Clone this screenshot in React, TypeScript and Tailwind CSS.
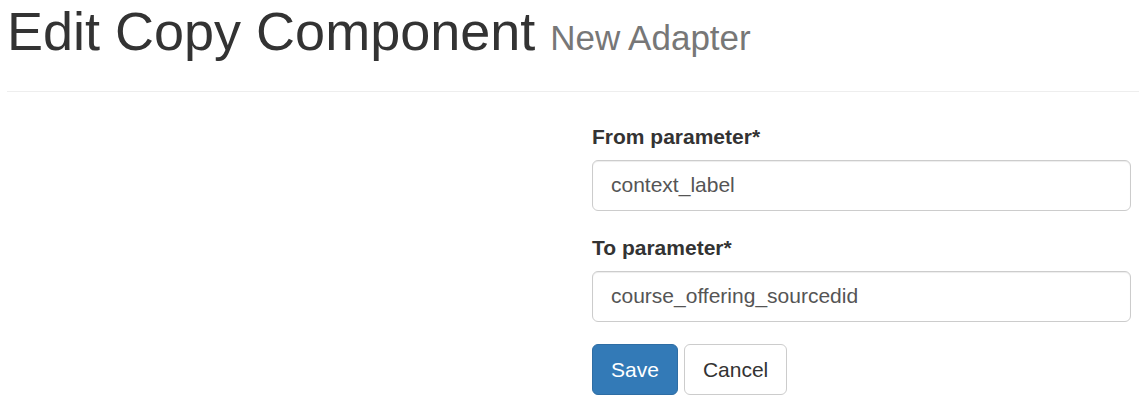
const fields = [
  { label: "From parameter*", value: "context_label" },
  { label: "To parameter*", value: "course_offering_sourcedid" },
];

const App = () => {
  return (
    <div className="min-h-[415px] bg-white px-[7px] font-['Liberation_Sans',Arial,sans-serif] text-[#333]">
      <div className="border-b border-[#eee] pt-[2px] pb-[30px]">
        <h1 className="text-[54px] leading-[59.4px] font-normal text-[#333]">
          Edit Copy Component{" "}
          <small className="text-[35px] leading-none text-[#777]">New Adapter</small>
        </h1>
      </div>

      <form className="ml-[585px] mr-[8px] mt-[30px]" onSubmit={(e) => e.preventDefault()}>
        {fields.map((field, index) => (
          <div className="mb-[22.5px]" key={index}>
            <label className="mb-[7.5px] block text-[21px] leading-[30px] font-bold text-[#333]">
              {field.label}
            </label>
            <input
              type="text"
              defaultValue={field.value}
              className="block h-[51px] w-full rounded-[6px] border border-[#ccc] bg-white px-[18px] py-[9px] text-[21px] leading-[30px] text-[#555] shadow-[inset_0_1px_1px_rgba(0,0,0,0.075)] outline-none"
            />
          </div>
        ))}
        <div className="flex gap-[6px]">
          <button
            type="submit"
            className="h-[51px] rounded-[6px] border border-[#2e6da4] bg-[#337ab7] px-[18px] text-[21px] leading-[30px] text-white"
          >
            Save
          </button>
          <button
            type="button"
            className="h-[51px] rounded-[6px] border border-[#ccc] bg-white px-[18px] text-[21px] leading-[30px] text-[#333]"
          >
            Cancel
          </button>
        </div>
      </form>
    </div>
  );
};

export default App;
